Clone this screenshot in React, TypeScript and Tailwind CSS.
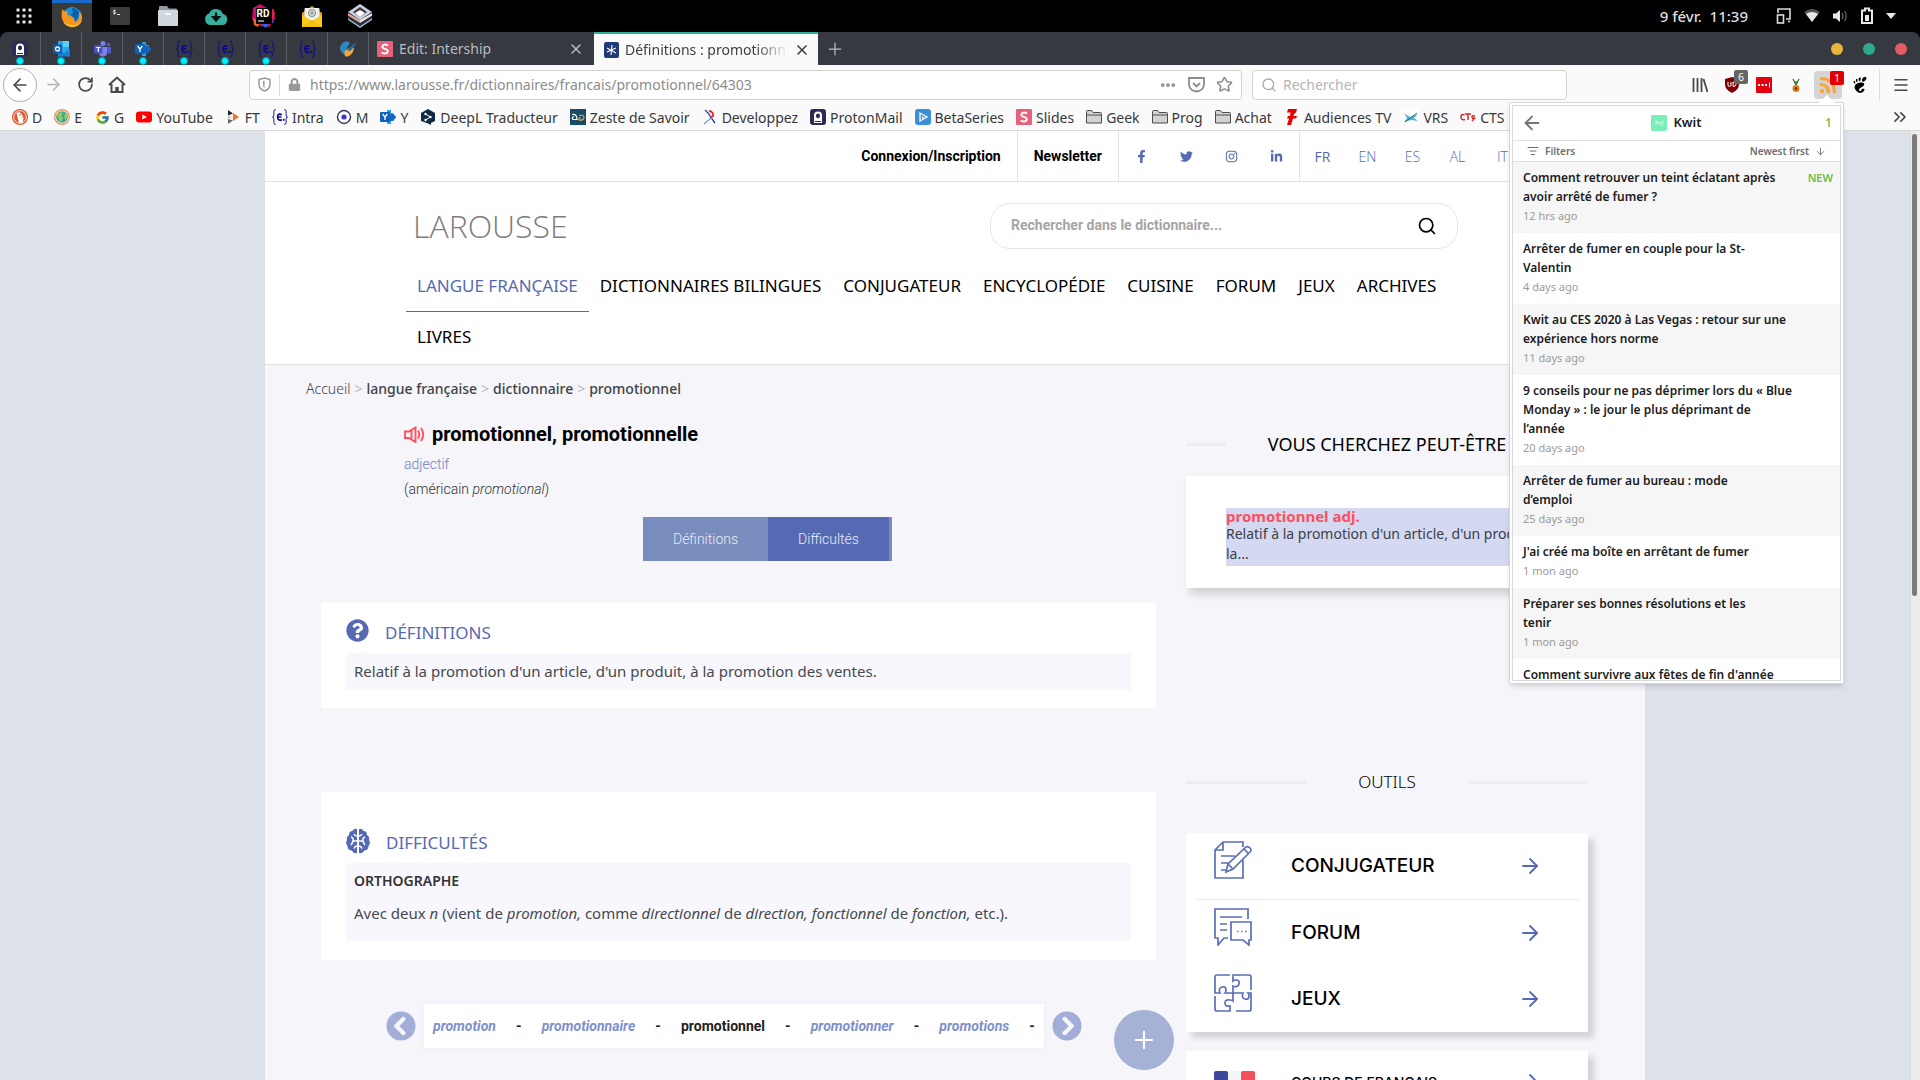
import type { ReactNode } from "react"
import {
  ArrowDown,
  ArrowLeft,
  ArrowRight,
  ChevronsRight,
  ListFilter,
  Menu,
  MoreHorizontal,
  Plus,
  RotateCw,
  Search,
  Star,
  X,
} from "lucide-react"
import {
  FaChevronCircleLeft,
  FaChevronCircleRight,
  FaFacebookF,
  FaInstagram,
  FaLinkedinIn,
  FaLock,
  FaQuestionCircle,
  FaTwitter,
} from "react-icons/fa"
import { FcGoogle } from "react-icons/fc"
import { SiGnome } from "react-icons/si"

// ---------- Small icons ----------

function AppsGrid() {
  return (
    <svg width="16" height="16" viewBox="0 0 16 16" fill="#e6e6e6">
      {[0, 6, 12].map(y => [0, 6, 12].map(x => <rect key={`${x}-${y}`} x={x + 0.5} y={y + 0.5} width="3" height="3" rx="0.6" />))}
    </svg>
  )
}

function Firefox() {
  return (
    <svg width="24" height="24" viewBox="0 0 24 24">
      <circle cx="12.5" cy="11.500" r="9.500" fill="#f59a23" />
      <path d="M5 4q4-4 10-2.500Q21 4 22 9l-2 3-4 6-2-6-5-1-5-4z" fill="#1d8fd8" />
      <path d="M12 2q5 0 7 5l-1 4-3 5-1-5-4-2 3-2z" fill="#0f5f9f" />
      <path d="M2 3l2 2 4 1-1 3 5 1-2 3q2 5 7 2 3-3 2-9 3 2 3 5-1 9-10 9Q2 19 1.500 10z" fill="#f7941d" />
      <path d="M3 16q4 6 11 5 6-1 8-7-4 5-9 5T3 16z" fill="#fdb92e" />
    </svg>
  )
}

function Terminal() {
  return (
    <svg width="20" height="18" viewBox="0 0 20 18">
      <rect width="20" height="18" rx="1" fill="#3b3b3b" />
      <path d="M5.700 3.500H4.200q-1 0-1 .8t1 .8h.6q1 0 1 .8t-1 .8H3M4.500 2.500v5" stroke="#ddd" strokeWidth="0.800" fill="none" />
      <path d="M7 7.500h3" stroke="#ddd" />
    </svg>
  )
}

function Files() {
  return (
    <svg width="20" height="20" viewBox="0 0 20 20">
      <path d="M1 1q0-1 1-1h7l2 2.500h7q1 0 1 1V8H1z" fill="#8e9ba4" />
      <rect y="4" width="20" height="16" rx="1" fill="#cfd8dc" />
      <path d="M7 8h6" stroke="#fff" strokeWidth="1.500" />
    </svg>
  )
}

function CloudDown() {
  return (
    <svg width="24" height="18" viewBox="0 0 24 18">
      <path d="M6 18a6 6 0 0 1-1-11.500A7.500 7.500 0 0 1 19 7a5.600 5.600 0 0 1-1 11z" fill="#34b19c" />
      <path d="M12 5.500v5M9 10l3 3.500 3-3.500z" stroke="#101010" strokeWidth="2.200" fill="#101010" />
    </svg>
  )
}

function Rider() {
  return (
    <svg width="24" height="24" viewBox="0 0 24 24">
      <path d="M1 4l7-4 7 4 7 1 1 10-6 8-9-1-8-7z" fill="#c90f5e" />
      <path d="M1 14l7 4-2 5-4-2z" fill="#f5622e" />
      <path d="M18 13l4 6-5-1-3 6-4-3z" fill="#087cfa" />
      <path d="M19 4l4 5-2 6-3-3z" fill="#e2234f" />
      <rect x="4" y="4" width="16" height="16" fill="#000" />
      <text x="4.500" y="12.500" fontSize="10" fontWeight="700" fontFamily="Roboto, sans-serif" fill="#fff">RD</text>
      <path d="M6 17h6" stroke="#ddd" strokeWidth="1.200" />
    </svg>
  )
}

function Mail() {
  return (
    <svg width="20" height="21" viewBox="0 0 20 21">
      <path d="M0 7l10-7 10 7v14H0z" fill="#d9a916" />
      <rect x="2.500" y="2" width="15" height="14" rx="1" fill="#efefef" />
      <circle cx="10" cy="7" r="3.500" fill="none" stroke="#777" />
      <circle cx="10" cy="7" r="1.200" fill="none" stroke="#777" />
      <path d="M0 9l10 6 10-6v12H0z" fill="#fbcb1c" />
      <path d="M0 21l10-7 10 7z" fill="#f3bd14" />
    </svg>
  )
}

function Boxes() {
  return (
    <svg width="24" height="24" viewBox="0 0 24 24">
      <path d="M0 14l12 8 12-8v2l-12 8-12-8z" fill="#9fb3cc" />
      <path d="M0 11l12 8 12-8v3l-12 8-12-8z" fill="#2b3340" />
      <path d="M0 9l12 7v3L0 11.500z" fill="#e6a98c" />
      <path d="M12 16l12-7v2.500L12 19z" fill="#f4e9e2" />
      <path d="M12 0l12 8-12 8L0 8z" fill="#c6d3e4" />
      <path d="M12 3l7 5-7 5-7-5z" fill="#4b3440" />
      <path d="M12 6l5 3-5 4-5-4z" fill="#fff" />
    </svg>
  )
}

function EpitechIcon() {
  return (
    <svg width="17" height="18" viewBox="0 0 17 18" fill="none" stroke="#0a0a92">
      <path d="M4 1Q2 1 2 3v3.500Q2 9 .5 9 2 9 2 11.500V15q0 2 2 2M13 1q2 0 2 2v3.500q0 2.500 1.500 2.500-1.500 0-1.500 2.500V15q0 2-2 2" />
      <path d="M10.500 6.500Q6 4.500 6 9t4.500 3M6 9h4" strokeWidth="1.800" />
      <circle cx="12.500" cy="12" r="0.700" fill="#0a0a92" />
    </svg>
  )
}

function ProtonIcon() {
  return (
    <svg width="16" height="16" viewBox="0 0 16 16">
      <rect width="16" height="16" rx="3" fill="#2b2b55" />
      <path d="M4 14V6.500a4 4 0 0 1 8 0V14z" fill="#fff" />
      <path d="M6 8V6.500a2 2 0 0 1 4 0V8l-2 1.500z" fill="#2b2b55" />
      <path d="M5 12.500h6" stroke="#2b2b55" />
    </svg>
  )
}

function OutlookIcon() {
  return (
    <svg width="17" height="16" viewBox="0 0 17 16">
      <rect x="5" width="11" height="12" fill="#29a9ea" />
      <path d="M10 0h6v6h-6z" fill="#5fd0f8" />
      <path d="M5 8l6 4 6-4v7.500H5z" fill="#1480d2" />
      <rect y="3.500" width="9" height="9" rx="1" fill="#0a5cb0" />
      <circle cx="4.500" cy="8" r="2" fill="none" stroke="#fff" strokeWidth="1.300" />
    </svg>
  )
}

function TeamsIcon() {
  return (
    <svg width="17" height="16" viewBox="0 0 17 16">
      <circle cx="9" cy="2.500" r="2.500" fill="#7b83eb" />
      <circle cx="14.500" cy="3.500" r="1.700" fill="#5059c9" />
      <path d="M12 6h5v4.500q0 2.500-3 2.500z" fill="#5059c9" />
      <path d="M5 6h8v5.500q0 4-4 4t-4-4z" fill="#7b83eb" />
      <rect y="4" width="8.500" height="8.500" rx="1" fill="#4b53bc" />
      <path d="M2.200 6.500h4.200M4.300 6.500v4.200" stroke="#fff" strokeWidth="1.200" />
    </svg>
  )
}

function YammerIcon() {
  return (
    <svg width="16" height="16" viewBox="0 0 16 16">
      <path d="M7 1h4v3h2l3 4-3 4h-2v3H7z" fill="#29a0e8" />
      <path d="M10 5h3l3 3-3 4h-3z" fill="#1068bd" />
      <rect y="3" width="10" height="10" rx="1" fill="#0f62b5" />
      <path d="M2.700 5l2.300 3.200L7.300 5M5 8v3" stroke="#fff" strokeWidth="1.300" fill="none" />
    </svg>
  )
}

function SwirlIcon() {
  return (
    <svg width="17" height="16" viewBox="0 0 17 16">
      <path d="M4 1q4-2 6 1l-3 5q-3 3-1 7-5-1-6-6 0-5 4-7z" fill="#2f86c4" />
      <path d="M5 15q-2-5 2-7l4-2 3 1q-1 6-5 8-2 1-4 0z" fill="#f0a53c" />
      <path d="M7 9l5-5 5-3-4 6-3 3z" fill="#1f6aa3" />
    </svg>
  )
}

function SlidesIcon() {
  return (
    <svg width="16" height="16" viewBox="0 0 16 16">
      <rect width="16" height="16" rx="1" fill="#e4637c" />
      <path d="M10.800 4.800Q10 3.500 8 3.500T5.300 5.600Q5.300 7.400 8 7.900t2.700 2.400Q10.700 12.500 8 12.500T5 11.200" stroke="#fff" strokeWidth="1.800" fill="none" />
    </svg>
  )
}

function LarousseIcon() {
  return (
    <svg width="15" height="16" viewBox="0 0 15 16">
      <rect width="15" height="16" rx="2" fill="#213a78" />
      <path d="M8 3L7 13M3 6l9 5M12 6l-9 4" stroke="#fff" strokeWidth="1.100" />
    </svg>
  )
}

function Duck() {
  return (
    <svg width="16" height="16" viewBox="0 0 16 16">
      <circle cx="8" cy="8" r="8" fill="#de5833" />
      <circle cx="8" cy="8" r="6.300" fill="none" stroke="#fff" strokeWidth="0.800" />
      <path d="M4.500 4q3-2 5 1l2 4-1 5H7z" fill="#fff" />
      <path d="M8 8l4-.5-3 2z" fill="#fdd20a" />
      <circle cx="8" cy="6" r="0.700" fill="#2d4f8e" />
    </svg>
  )
}

function Ecosia() {
  return (
    <svg width="16" height="16" viewBox="0 0 16 16">
      <circle cx="8" cy="8" r="8" fill="#ef8d6b" />
      <circle cx="8" cy="8" r="6.800" fill="#f3e7a1" />
      <circle cx="8" cy="8" r="5.800" fill="#36a3bd" />
      <path d="M3 6q3-4 6-2l-2 3 2 2-2 4q-3-1-2-4zM10 6l3-1v4l-2 2z" fill="#9fcf3f" />
    </svg>
  )
}

function YoutubeIcon() {
  return (
    <svg width="16" height="16" viewBox="0 0 16 16">
      <rect y="2.500" width="16" height="11" rx="3" fill="#f00" />
      <path d="M6.300 5.500v5L10.800 8z" fill="#fff" />
    </svg>
  )
}

function FtIcon() {
  return (
    <svg width="14" height="16" viewBox="0 0 14 16">
      <path d="M2 1l5 3.500-5 2z" fill="#222" />
      <path d="M2 6.500l4 1.500-4 2z" fill="#c4c4c4" />
      <path d="M2 10l5 1.500L2 15z" fill="#666" />
      <path d="M7 4l6 4-6 4z" fill="#f4702b" />
    </svg>
  )
}

function TargetIcon() {
  return (
    <svg width="16" height="16" viewBox="0 0 16 16">
      <circle cx="8" cy="8" r="6.500" fill="#fff" stroke="#333a56" strokeWidth="1.400" />
      <circle cx="8" cy="8" r="2.600" fill="#3b36c9" />
    </svg>
  )
}

function DeeplIcon() {
  return (
    <svg width="14" height="16" viewBox="0 0 14 16">
      <path d="M7 0l7 4v8l-4 2v2l-3-1.500L0 12V4z" fill="#0f2b46" />
      <path d="M4.500 5l5 3-5 3" stroke="#fff" fill="none" />
      <circle cx="4.500" cy="5" r="1.200" fill="#fff" />
      <circle cx="9.500" cy="8" r="1.200" fill="#fff" />
      <circle cx="4.500" cy="11" r="1.200" fill="#fff" />
    </svg>
  )
}

function ZesteIcon() {
  return (
    <svg width="16" height="16" viewBox="0 0 16 16">
      <rect width="16" height="16" fill="#174c66" />
      <path d="M2 5.500q5-1 5 5H3q-2-2 1-3" stroke="#fff" strokeWidth="1.200" fill="none" />
      <path d="M9 6.500q5-1 5 2T9 11q-1-2 2-2.500" stroke="#f0a93c" strokeWidth="1.200" fill="none" />
    </svg>
  )
}

function DeveloppezIcon() {
  return (
    <svg width="14" height="16" viewBox="0 0 14 16" fill="none">
      <path d="M2 1q4 3 7 9l3 4" stroke="#1a3ba8" strokeWidth="1.300" />
      <path d="M6 2q5 1 4 5L7 9" stroke="#e22" strokeWidth="1.800" />
      <path d="M9 9Q5 11 1 15" stroke="#6b95d6" strokeWidth="1.200" />
    </svg>
  )
}

function BetaIcon() {
  return (
    <svg width="16" height="16" viewBox="0 0 16 16">
      <rect width="16" height="16" rx="3" fill="#3b8fd6" />
      <path d="M5 4v8l7-4z" stroke="#fff" strokeWidth="1.300" fill="none" />
      <path d="M7 7v3l2-1.500z" fill="#fff" />
    </svg>
  )
}

function FolderIcon() {
  return (
    <svg width="16" height="16" viewBox="0 0 16 16" stroke="#4d4d4d" fill="#d2d2d2">
      <path d="M.5 14V2.500q0-1 1-1h4l1.500 2h7.500q1 0 1 1V14z" />
      <path d="M.5 6h15" />
    </svg>
  )
}

function AudienceIcon() {
  return (
    <svg width="12" height="16" viewBox="0 0 12 16" fill="#e60000">
      <path d="M2 0h9l-1 3.500L8 5l-.5 2H11l-1 2.500H7L5 16H1l2-6.500H1L2 7h2l.5-3.500H1z" />
    </svg>
  )
}

function VrsIcon() {
  return (
    <svg width="16" height="16" viewBox="0 0 16 16">
      <rect width="16" height="16" fill="#fff" />
      <path d="M1 4l6 4 8-3-4 4 4 3-7-1-7 2 3-4z" fill="#55b4d9" />
      <path d="M2 13l12-9" stroke="#2e5c7d" />
    </svg>
  )
}

function CtsIcon() {
  return (
    <svg width="16" height="16" viewBox="0 0 16 16" fill="none" stroke="#cf2a2a" strokeWidth="1.500">
      <path d="M4.500 6Q1 4.500 1 8t4 2.500M5 5h6M8 5v6M15 7q-3-1-3 .8t2 1.200T12 12" />
    </svg>
  )
}

function LibraryIcon() {
  return (
    <svg width="16" height="16" viewBox="0 0 16 16" stroke="#4a4a4a" strokeWidth="1.800">
      <path d="M1.500 1v14M5.500 1v14M9.500 1v14M11.500 2l4 13" />
    </svg>
  )
}

function HomeIcon() {
  return (
    <svg width="18" height="17" viewBox="0 0 18 17" fill="none" stroke="#4a4a4a" strokeWidth="2">
      <path d="M1 9l8-7.500L17 9M3.500 8v8h11V8" />
      <path d="M9 16v-5" strokeWidth="3.500" />
    </svg>
  )
}

function ShieldIcon() {
  return (
    <svg width="13" height="15" viewBox="0 0 13 15">
      <path d="M1 2.500L6.500 1 12 2.500V7q0 5-5.500 7Q1 12 1 7z" fill="none" stroke="#999" strokeWidth="1.500" />
      <path d="M6.500 3.500v8Q5 10 5 7V4z" fill="#999" />
    </svg>
  )
}

function PocketIcon() {
  return (
    <svg width="17" height="16" viewBox="0 0 17 16" fill="none" stroke="#8c8c8c" strokeWidth="1.800">
      <path d="M1 1h15v6.500q-.5 6-7.500 7-7-1-7.500-7z" />
      <path d="M5 6l3.500 3.500L12 6" />
    </svg>
  )
}

function SpeakerIcon() {
  return (
    <svg width="21" height="17" viewBox="0 0 21 17" fill="none" stroke="#ff4f5e" strokeWidth="1.900">
      <path d="M5 5.500H1V12h4L11.500 16V1.500zM7.500 4v9.500" />
      <path d="M14 4.500q2.500 4 0 8M17 2q4.500 6.500 0 13" />
    </svg>
  )
}

function BrainIcon() {
  return (
    <svg width="24" height="26" viewBox="0 0 24 26">
      <path
        d="M11 1Q8 0 6.500 3 3 3 3 7 0 8.500 1 12q-2 3 .5 6 0 4 4 4.500Q8 26 11 25zM13 1q3-1 4.500 2Q21 3 21 7q3 1.500 2 5 2 3-.5 6 0 4-4 4.500Q16 26 13 25z"
        fill="#556ab3"
      />
      <path d="M11 8q-2 0-3-2M13 8q2 0 3-2M12 13H7M12 13h5M5 9q3 1 2 4t-2 4M19 9q-3 1-2 4t2 4M11 18q-2 0-3 2.500M13 18q2 0 3 2.500" stroke="#fff" strokeWidth="1.500" fill="none" />
    </svg>
  )
}

function ConjugateurIcon() {
  return (
    <svg width="38" height="38" viewBox="0 0 38 38" fill="none" stroke="#5a6fb8" strokeWidth="1.700">
      <path d="M29 6V1H9L1 9v28h28V19M9 1v8H1" />
      <path d="M7 15h14M7 22h8M7 29h5M12 31l2-8L32 6q2-1 4 1t0 4L19 28zM14 23l5 5M30 8l4 4" />
    </svg>
  )
}

function ForumIcon() {
  return (
    <svg width="38" height="38" viewBox="0 0 38 38" fill="none" stroke="#5a6fb8" strokeWidth="1.700">
      <path d="M34 11V1H1v29h3v7l6-7h4M6 9h22M6 16h7M6 22h7" />
      <path d="M17 14h20v18h-2v5l-6-5H17z" />
      <path d="M23 23.500h1.500M27 23.500h1.500M31 23.500h1.500" />
    </svg>
  )
}

function JeuxIcon() {
  return (
    <svg width="38" height="38" viewBox="0 0 38 38" fill="none" stroke="#5a6fb8" strokeWidth="1.700">
      <path d="M16 1H3Q1 1 1 3v16h5q-2-5 2-6t4 3q0 2-1 3h8v-7q5 2 6-2t-3-4q-2 0-3 1V1h16q2 0 2 2v13" />
      <path d="M1 22v13q0 2 2 2h13v-5q-5 1-5-3t5-3q2 0 3 1v-8h10q-2 5 2 6t4-3q0-2-1-3h3v16q0 2-2 2H22" />
    </svg>
  )
}

function StatusIcons() {
  return (
    <div className="flex items-center gap-3">
      <svg width="16" height="18" viewBox="0 0 16 18" fill="none" stroke="#dcdcdc" strokeWidth="1.600">
        <path d="M2 6V2h12v10h-4M12 14.500h2" />
        <rect x="1.500" y="8" width="6" height="8" />
      </svg>
      <svg width="16" height="14" viewBox="0 0 16 14">
        <path d="M0 3q8-6 16 0l-8 10z" fill="#555" />
        <path d="M2 5q6-4 12 0l-6 8z" fill="#e8e8e8" />
      </svg>
      <svg width="16" height="14" viewBox="0 0 16 14">
        <path d="M1 4.500h3L8 1v12L4 9.500H1z" fill="#e8e8e8" />
        <path d="M10 4q2 3 0 6M12.500 2q3.500 5 0 10" stroke="#666" strokeWidth="1.300" fill="none" />
      </svg>
      <svg width="14" height="18" viewBox="0 0 14 18">
        <path d="M2 3.500h3V1.500h4v2h3V16H2z" fill="none" stroke="#e8e8e8" strokeWidth="2" />
        <path d="M5 8h4v6H5z" fill="#e8e8e8" />
      </svg>
      <svg width="10" height="6" viewBox="0 0 10 6" fill="#e8e8e8">
        <path d="M0 0h10L5 6z" />
      </svg>
    </div>
  )
}

function UblockIcon() {
  return (
    <svg width="16" height="16" viewBox="0 0 16 16">
      <path d="M8 0l7 2v5q0 6-7 9-7-3-7-9V2z" fill="#800000" />
      <path d="M4 5v3q0 1.500 1.500 1.500T7 8V5M9 5v4.500q3 0 3-2T9 5z" stroke="#fff" fill="none" />
    </svg>
  )
}

function PasswordIcon() {
  return (
    <svg width="16" height="16" viewBox="0 0 16 16">
      <rect width="16" height="16" rx="1" fill="#e3000f" />
      <path d="M2 8h2M5.500 8h2M9 8h2" stroke="#fff" strokeWidth="2" />
      <path d="M13.500 5.500v5" stroke="#fff" />
    </svg>
  )
}

function CarrotIcon() {
  return (
    <svg width="10" height="16" viewBox="0 0 10 16">
      <path d="M5 8L2 2M5 8V4M5 8l3-6" stroke="#4d7a2e" strokeWidth="1.400" />
      <circle cx="5" cy="11.500" r="3.500" fill="#e07b18" />
      <circle cx="5" cy="11.500" r="1.300" fill="#5f2b05" />
    </svg>
  )
}

function RssIcon() {
  return (
    <svg width="18" height="18" viewBox="0 0 18 18" fill="none" stroke="#f9a436" strokeWidth="3.200">
      <path d="M1 2.500q14.500 0 14.500 14.500M1 8.500q8.500 0 8.500 8.500" />
      <circle cx="3" cy="15" r="2.200" fill="#f9a436" stroke="none" />
    </svg>
  )
}

// ---------- Data ----------

const launchers = [
  { name: "Terminal", icon: <Terminal /> },
  { name: "Fichiers", icon: <Files /> },
  { name: "Cloud", icon: <CloudDown /> },
  { name: "Rider", icon: <Rider /> },
  { name: "Courrier", icon: <Mail /> },
  { name: "Boxes", icon: <Boxes /> },
]

const pinnedTabs = [
  { name: "ProtonMail", icon: <ProtonIcon />, unread: true },
  { name: "Outlook", icon: <OutlookIcon />, unread: true },
  { name: "Teams", icon: <TeamsIcon />, unread: true },
  { name: "Yammer", icon: <YammerIcon />, unread: true },
  { name: "Intra 1", icon: <EpitechIcon />, unread: true },
  { name: "Intra 2", icon: <EpitechIcon />, unread: true },
  { name: "Intra 3", icon: <EpitechIcon />, unread: true },
  { name: "Intra 4", icon: <EpitechIcon />, unread: false },
  { name: "Swirl", icon: <SwirlIcon />, unread: false },
]

const bookmarks: { label: string; icon: ReactNode }[] = [
  { label: "D", icon: <Duck /> },
  { label: "E", icon: <Ecosia /> },
  { label: "G", icon: <FcGoogle size={15} /> },
  { label: "YouTube", icon: <YoutubeIcon /> },
  { label: "FT", icon: <FtIcon /> },
  { label: "Intra", icon: <EpitechIcon /> },
  { label: "M", icon: <TargetIcon /> },
  { label: "Y", icon: <YammerIcon /> },
  { label: "DeepL Traducteur", icon: <DeeplIcon /> },
  { label: "Zeste de Savoir", icon: <ZesteIcon /> },
  { label: "Developpez", icon: <DeveloppezIcon /> },
  { label: "ProtonMail", icon: <ProtonIcon /> },
  { label: "BetaSeries", icon: <BetaIcon /> },
  { label: "Slides", icon: <SlidesIcon /> },
  { label: "Geek", icon: <FolderIcon /> },
  { label: "Prog", icon: <FolderIcon /> },
  { label: "Achat", icon: <FolderIcon /> },
  { label: "Audiences TV", icon: <AudienceIcon /> },
  { label: "VRS", icon: <VrsIcon /> },
  { label: "CTS", icon: <CtsIcon /> },
]

const navItems = [
  "LANGUE FRANÇAISE",
  "DICTIONNAIRES BILINGUES",
  "CONJUGATEUR",
  "ENCYCLOPÉDIE",
  "CUISINE",
  "FORUM",
  "JEUX",
  "ARCHIVES",
  "LIVRES",
]

const feed = [
  { title: "Comment retrouver un teint éclatant après\navoir arrêté de fumer ?", age: "12 hrs ago", isNew: true },
  { title: "Arrêter de fumer en couple pour la St-\nValentin", age: "4 days ago" },
  { title: "Kwit au CES 2020 à Las Vegas : retour sur une\nexpérience hors norme", age: "11 days ago" },
  { title: "9 conseils pour ne pas déprimer lors du « Blue\nMonday » : le jour le plus déprimant de\nl’année", age: "20 days ago" },
  { title: "Arrêter de fumer au bureau : mode\nd’emploi", age: "25 days ago" },
  { title: "J'ai créé ma boîte en arrêtant de fumer", age: "1 mon ago" },
  { title: "Préparer ses bonnes résolutions et les\ntenir", age: "1 mon ago" },
  { title: "Comment survivre aux fêtes de fin d'année" },
]

// ---------- Browser chrome ----------

function DesktopBar() {
  return (
    <div className="flex h-8 shrink-0 items-center bg-black pr-6 text-[15px] font-medium text-[#dedede]">
      <button type="button" aria-label="Applications" className="ml-4 mr-5"><AppsGrid /></button>
      <button type="button" aria-label="Firefox" className="flex h-8 w-10 items-center justify-center border-t-[3px] border-[#1b6acb] bg-[#3a3a3a]">
        <Firefox />
      </button>
      <div className="ml-1 flex">
        {launchers.map(app => (
          <button key={app.name} type="button" aria-label={app.name} className="flex h-8 w-12 items-center justify-center">{app.icon}</button>
        ))}
      </div>
      <span className="ml-auto mr-7 whitespace-pre">9 févr.  11:39</span>
      <StatusIcons />
    </div>
  )
}

function TabBar() {
  return (
    <div className="bg-black">
      <div className="flex h-[33px] items-stretch rounded-t-lg bg-[#363940] text-[14px] text-[#b9bcc0]">
        {pinnedTabs.map(tab => (
          <button key={tab.name} type="button" aria-label={tab.name} className="relative flex w-[41px] items-center justify-center border-r border-[#5b5e63]">
            {tab.icon}
            {tab.unread && <span className="absolute bottom-0 left-4 h-2 w-2 rounded-full border border-[#0e9aa7] bg-[#00f0ff]" />}
          </button>
        ))}
        <div className="flex w-[225px] items-center gap-[6px] px-2 pr-[10px]">
          <SlidesIcon />
          <span className="flex-1">Edit: Intership</span>
          <button type="button" aria-label="Fermer l'onglet"><X size={16} /></button>
        </div>
        <div className="flex w-[224px] items-center gap-[6px] border-t-2 border-[#2eb398] bg-[#fafafa] pl-[10px] pr-2 text-[#404040]">
          <LarousseIcon />
          <span className="min-w-0 flex-1 overflow-hidden whitespace-nowrap [mask-image:linear-gradient(to_right,#000_80%,transparent)]">Définitions : promotionnel</span>
          <button type="button" aria-label="Fermer l'onglet"><X size={16} strokeWidth={2.5} /></button>
        </div>
        <button type="button" aria-label="Nouvel onglet" className="ml-[7px]"><Plus size={20} strokeWidth={1.5} /></button>
        <div className="ml-auto mr-[13px] flex items-center gap-5">
          <button type="button" aria-label="Réduire" className="h-3 w-3 rounded-full bg-[#e9b63b]" />
          <button type="button" aria-label="Agrandir" className="h-3 w-3 rounded-full bg-[#2ea88f]" />
          <button type="button" aria-label="Fermer" className="h-3 w-3 rounded-full bg-[#e65c65]" />
        </div>
      </div>
    </div>
  )
}

function FeedPopup() {
  return (
    <div className="absolute right-[76px] top-[37px] z-20 w-[335px] rounded-xs border border-[#d6d6d6] bg-white p-[2px] shadow-md">
      <span className="absolute -top-2 right-[8px] h-0 w-0 border-x-8 border-b-8 border-x-transparent border-b-white" />
      <div className="h-[576px] overflow-hidden border border-[#d9d9d9]">
        <div className="flex h-[35px] items-center justify-between border-b border-[#dedede] px-2 text-[12px] font-semibold">
          <button type="button" aria-label="Retour" className="w-[22px] text-[#757575]"><ArrowLeft size={22} /></button>
          <h2 className="flex items-center gap-[6px] text-[13px] text-[#1c1c1c]">
            <svg width="16" height="16" viewBox="0 0 16 16">
              <rect width="16" height="16" rx="2" fill="#78efb6" />
              <path d="M4 5l8 6M5 10V7l3 2 4-3v3" stroke="#d4fbe8" fill="none" />
            </svg>
            Kwit
          </h2>
          <span className="w-[22px] text-right text-[#7cc254]">1</span>
        </div>
        <div className="flex h-[21px] items-center justify-between border-b border-[#dedede] px-[14px] text-[10px] font-semibold text-[#6d6d6d]">
          <button type="button" className="flex items-center gap-[6px]"><ListFilter size={12} />Filters</button>
          <button type="button" className="flex items-center gap-[6px]">Newest first<ArrowDown size={11} /></button>
        </div>
        <ul>
          {feed.map(item => (
            <li key={item.title} className="flex justify-between bg-white px-[10px] pb-[7px] pt-[6px] odd:bg-[#f6f6f6]">
              <div>
                <a href="#" className="block whitespace-pre text-[12px] font-semibold leading-[19px] text-[#1c1c1c]">{item.title}</a>
                {item.age && <span className="block text-[11px] leading-5 text-[#9b9b9b]">{item.age}</span>}
              </div>
              {item.isNew && <span className="-mr-[3px] text-[11px] font-semibold leading-[19px] text-[#6cbf3f]">NEW</span>}
            </li>
          ))}
        </ul>
      </div>
    </div>
  )
}

function Toolbar() {
  return (
    <div className="relative shrink-0 border-b border-[#d8d8d8] bg-[#fafafa] text-[#4a4a4a]">
      <div className="flex h-[39px] items-center pl-[3px] pr-[10px]">
        <button type="button" aria-label="Précédent" className="flex h-[34px] w-[34px] items-center justify-center rounded-full border border-[#b0b0b0] bg-white"><ArrowLeft size={20} /></button>
        <div className="ml-[7px] flex items-center gap-[14px]">
          <button type="button" aria-label="Suivant" className="text-[#b5b5b5]"><ArrowRight size={19} /></button>
          <button type="button" aria-label="Recharger"><RotateCw size={17} strokeWidth={2.5} /></button>
          <button type="button" aria-label="Accueil"><HomeIcon /></button>
        </div>
        <div className="ml-[123px] flex h-[30px] flex-1 items-center rounded-sm border border-[#d3d3d3] bg-white px-2 text-[#8c8c8c]">
          <ShieldIcon />
          <span className="ml-2 mr-2 h-[22px] w-px bg-[#d9d9d9]" />
          <FaLock size={13} className="text-[#999]" />
          <input aria-label="Adresse" defaultValue="https://www.larousse.fr/dictionnaires/francais/promotionnel/64303" className="ml-[9px] min-w-0 flex-1 bg-transparent text-[14px] outline-none" />
          <div className="flex items-center gap-[11px]">
            <button type="button" aria-label="Actions"><MoreHorizontal size={18} strokeWidth={3} /></button>
            <button type="button" aria-label="Pocket"><PocketIcon /></button>
            <button type="button" aria-label="Marquer la page"><Star size={17} strokeWidth={2.2} /></button>
          </div>
        </div>
        <div className="ml-[10px] flex h-[30px] w-[315px] items-center gap-[6px] rounded-sm border border-[#d3d3d3] bg-white px-2 text-[#a8a8a8]">
          <Search size={16} />
          <input aria-label="Rechercher" placeholder="Rechercher" className="min-w-0 flex-1 bg-transparent text-[14px] outline-none placeholder:text-[#b5b5b5]" />
        </div>
        <div className="ml-[117px] flex items-center">
          <button type="button" aria-label="Bibliothèque" className="flex w-8 justify-center"><LibraryIcon /></button>
          <button type="button" aria-label="uBlock" className="relative flex w-8 justify-center">
            <UblockIcon />
            <span className="absolute -top-[7px] left-[18px] h-[14px] w-[14px] rounded-xs bg-[#666] text-center text-[10px] leading-[14px] text-white">6</span>
          </button>
          <button type="button" aria-label="Mots de passe" className="flex w-8 justify-center"><PasswordIcon /></button>
          <button type="button" aria-label="Carotte" className="flex w-8 justify-center"><CarrotIcon /></button>
          <button type="button" aria-label="Flux" className="relative mx-[2px] flex h-7 w-7 items-center justify-center rounded-sm bg-[#d4d4d4]">
            <RssIcon />
            <span className="absolute left-4 top-0 h-[14px] w-[14px] rounded-xs bg-[#e00000] text-center text-[10px] leading-[14px] text-white">1</span>
          </button>
          <button type="button" aria-label="Gnome" className="flex w-8 justify-center text-black"><SiGnome size={16} /></button>
          <span className="ml-[3px] mr-3 h-8 w-px bg-[#dcdcdc]" />
          <button type="button" aria-label="Menu"><Menu size={18} /></button>
        </div>
      </div>
      <div className="flex h-[26px] items-center pl-3 pr-[10px] text-[14px] text-[#383838]">
        <div className="flex items-center gap-3">
          {bookmarks.map(b => (
            <a key={b.label} href="#" className="flex items-center gap-1 whitespace-nowrap">
              <span className="flex w-4 justify-center">{b.icon}</span>
              {b.label}
            </a>
          ))}
        </div>
        <button type="button" aria-label="Plus de marque-pages" className="ml-auto text-[#4a4a4a]"><ChevronsRight size={20} /></button>
      </div>
      <FeedPopup />
    </div>
  )
}

// ---------- Larousse page ----------

function SiteHeader() {
  return (
    <header className="border-b border-[#dedfe3] bg-white pb-px">
      <div className="flex h-[51px] items-stretch justify-end border-b border-[#e2e2e5] pr-[120px] font-['Roboto',sans-serif] text-[14px] font-bold text-black">
        <a href="#" className="flex items-center px-4">Connexion/Inscription</a>
        <a href="#" className="flex items-center border-l border-[#e2e2e5] px-4">Newsletter</a>
        <div className="flex items-center border-x border-[#e2e2e5] text-[#556ab3]">
          <a href="#" aria-label="Facebook" className="flex w-[45px] justify-center"><FaFacebookF size={13} /></a>
          <a href="#" aria-label="Twitter" className="flex w-[45px] justify-center"><FaTwitter size={13} /></a>
          <a href="#" aria-label="Instagram" className="flex w-[45px] justify-center"><FaInstagram size={13} /></a>
          <a href="#" aria-label="LinkedIn" className="flex w-[45px] justify-center"><FaLinkedinIn size={13} /></a>
        </div>
        <div className="flex items-center font-['Open_Sans',sans-serif] text-[14px] font-light text-[#556ab3]">
          <a href="#" className="w-[45px] text-center font-normal">FR</a>
          <a href="#" className="w-[45px] text-center">EN</a>
          <a href="#" className="w-[45px] text-center">ES</a>
          <a href="#" className="w-[45px] text-center">AL</a>
          <a href="#" className="w-[45px] text-center">IT</a>
        </div>
      </div>
      <div className="flex h-[79px] items-center justify-between pl-[148px] pr-[187px] pt-2">
        <a href="#" className="font-['Open_Sans',sans-serif] text-[32px] font-light text-[#7d7d7d]">LAROUSSE</a>
        <form className="flex h-[46px] w-[468px] items-center rounded-[20px] border border-[#e7e7ea] pl-5 pr-5 font-['Roboto',sans-serif] text-[14px] font-bold">
          <input aria-label="Rechercher dans le dictionnaire" placeholder="Rechercher dans le dictionnaire..." className="min-w-0 flex-1 outline-none placeholder:text-[#a5a5a5]" />
          <button type="submit" aria-label="Lancer la recherche" className="text-black"><Search size={20} /></button>
        </form>
      </div>
      <nav className="flex flex-wrap pl-[141px] pr-[170px] text-[17px] text-black">
        {navItems.map((item, i) => (
          <a key={item} href="#" className={i === 0 ? "h-[51px] border-b border-[#556ab3] px-[11px] leading-[50px] text-[#556ab3]" : "h-[51px] px-[11px] leading-[50px]"}>{item}</a>
        ))}
      </nav>
    </header>
  )
}

function Breadcrumb() {
  return (
    <nav className="flex gap-1 pl-[41px] pt-[13px] text-[14px] leading-[22px] text-[#3f4247]">
      <a href="#" className="font-light">Accueil</a>
      <span className="text-[#b9bac2]">&gt;</span>
      <a href="#" className="font-medium">langue française</a>
      <span className="text-[#b9bac2]">&gt;</span>
      <a href="#" className="font-medium">dictionnaire</a>
      <span className="text-[#b9bac2]">&gt;</span>
      <a href="#" className="font-medium">promotionnel</a>
    </nav>
  )
}

function Article() {
  return (
    <main className="min-w-0 flex-1">
      <div className="pl-[83px] pt-5 font-['Roboto',sans-serif]">
        <div className="flex items-center gap-[7px] leading-7">
          <button type="button" aria-label="Écouter"><SpeakerIcon /></button>
          <h1 className="text-[20px] font-bold text-black">promotionnel, promotionnelle</h1>
        </div>
        <p className="pt-1 text-[14px] font-light leading-[25px] text-[#6d80c4]">adjectif</p>
        <p className="text-[14px] font-light leading-[25px] text-[#333]">(américain <i>promotional</i>)</p>
      </div>
      <div className="mt-[15px] flex justify-center pl-[58px]">
        <div className="flex h-11 w-[249px] bg-[#788cbe] pr-[3px] font-['Roboto',sans-serif] text-[14px] font-light text-[#e8ebf6]">
          <button type="button" className="w-[125px]">Définitions</button>
          <button type="button" className="flex-1 bg-[#566ab4]">Difficultés</button>
        </div>
      </div>

      <section className="mt-[42px] bg-white px-[25px] pb-[18px] pt-4 text-[15px] text-[#46494e]">
        <h2 className="flex h-[34px] items-start gap-4 text-[17px] leading-7 text-[#556ab3]">
          <FaQuestionCircle size={23} />
          DÉFINITIONS
        </h2>
        <p className="bg-[#f7f7fd] px-2 leading-[37px]">Relatif à la promotion d'un article, d'un produit, à la promotion des ventes.</p>
      </section>

      <section className="mt-[84px] bg-white px-[25px] pb-[19px] pt-[36px] text-[15px] text-[#46494e]">
        <h2 className="flex h-[35px] items-start gap-4 text-[17px] leading-[30px] text-[#556ab3]">
          <BrainIcon />
          DIFFICULTÉS
        </h2>
        <div className="bg-[#f7f7fd] px-2 pb-3 pt-[2px] leading-8">
          <h3 className="text-[14px] font-semibold text-[#333]">ORTHOGRAPHE</h3>
          <p>
            Avec deux <i>n</i> (vient de <i>promotion,</i> comme <i>directionnel</i> de <i>direction, fonctionnel</i> de <i>fonction,</i> etc.).
          </p>
        </div>
      </section>

      <div className="mt-[42px] flex items-center pl-[65px] font-['Roboto',sans-serif]">
        <button type="button" aria-label="Mot précédent" className="text-[#a3aed8]"><FaChevronCircleLeft size={30} /></button>
        <div className="mx-[6px] flex h-12 w-[624px] items-center justify-between border-2 border-[#f0f4f8] bg-white px-[9px] text-[14px] font-bold text-[#222]">
          <a href="#" className="italic text-[#7f90cd]">promotion</a>
          <span>-</span>
          <a href="#" className="italic text-[#7f90cd]">promotionnaire</a>
          <span>-</span>
          <span>promotionnel</span>
          <span>-</span>
          <a href="#" className="italic text-[#7f90cd]">promotionner</a>
          <span>-</span>
          <a href="#" className="italic text-[#7f90cd]">promotions</a>
          <span>-</span>
        </div>
        <button type="button" aria-label="Mot suivant" className="text-[#a3aed8]"><FaChevronCircleRight size={30} /></button>
      </div>
    </main>
  )
}

function ToolRow({ label, icon }: { label: string; icon: ReactNode }) {
  return (
    <a href="#" className="flex h-[66px] items-center px-7 font-['Inter',sans-serif] text-[19px] font-medium text-black">
      <span className="w-[77px] pb-3">{icon}</span>
      <span className="flex-1">{label}</span>
      <ArrowRight size={24} strokeWidth={1.8} className="mr-[18px] text-[#556ab3]" />
    </a>
  )
}

function Sidebar() {
  return (
    <aside className="w-[402px] shrink-0">
      <h2 className="mt-[30px] flex h-7 items-center justify-between text-[18px] text-black">
        <span className="h-[3px] w-10 bg-[#eeeeef]" />
        VOUS CHERCHEZ PEUT-ÊTRE
        <span className="h-[3px] w-10 bg-[#eeeeef]" />
      </h2>
      <div className="mt-[18px] bg-white px-10 pb-[22px] pt-8 shadow-[4px_6px_8px_#cfcfd2]">
        <a href="#" className="block bg-[#d4d8f1] pb-[2px] text-[14px] leading-5 text-[#3c3f47]">
          <b className="block text-[15px] leading-4 text-[#ff4f5e]">promotionnel adj.</b>
          Relatif à la promotion d'un article, d'un produit, à la...
        </a>
      </div>

      <h2 className="mt-[180px] flex h-7 items-center justify-between text-[17px] font-light text-black">
        <span className="h-[3px] w-[120px] bg-[#eeeeef]" />
        OUTILS
        <span className="h-[3px] w-[120px] bg-[#eeeeef]" />
      </h2>
      <div className="mt-[37px] bg-white shadow-[6px_6px_6px_#d3d3d6]">
        <ToolRow label="CONJUGATEUR" icon={<ConjugateurIcon />} />
        <hr className="mx-[10px] border-[#ececee]" />
        <ToolRow label="FORUM" icon={<ForumIcon />} />
        <ToolRow label="JEUX" icon={<JeuxIcon />} />
      </div>
      <a href="#" className="mt-[19px] flex h-[62px] items-center bg-white px-7 font-['Inter',sans-serif] text-[14px] font-medium text-black shadow-[6px_6px_6px_#d3d3d6]">
        <svg width="41" height="22" viewBox="0 0 41 22" className="mr-9">
          <rect width="14" height="22" rx="2" fill="#3f479c" />
          <rect x="14" width="13" height="22" fill="#f4f5f6" />
          <rect x="27" width="14" height="22" rx="2" fill="#f2505a" />
        </svg>
        <span className="flex-1">COURS DE FRANÇAIS</span>
        <ArrowRight size={24} strokeWidth={1.8} className="mr-[18px] text-[#556ab3]" />
      </a>
    </aside>
  )
}

export default function App() {
  return (
    <div className="flex h-screen flex-col overflow-hidden bg-[#dde1ea] font-['Noto_Sans',sans-serif]">
      <DesktopBar />
      <TabBar />
      <Toolbar />
      <div className="flex min-h-0 flex-1">
        <div className="relative flex-1 overflow-hidden">
          <div className="mx-auto min-h-full max-w-[1380px] bg-[#f5f5fa]">
            <SiteHeader />
            <Breadcrumb />
            <div className="flex gap-[30px] pl-14 pr-[57px]">
              <Article />
              <Sidebar />
            </div>
          </div>
          <button type="button" aria-label="Ajouter" className="absolute bottom-[10px] left-[1114px] flex h-[60px] w-[60px] items-center justify-center rounded-full bg-[#a5b1d5] text-white">
            <Plus size={28} strokeWidth={1.8} />
          </button>
        </div>
        {/* Page scrollbar */}
        <div className="w-[10px] border-l border-[#dcdcdc] bg-[#ededed] pl-px pt-[3px]">
          <div className="h-[462px] w-[5px] rounded-full bg-[#7b7b7b]" />
        </div>
      </div>
    </div>
  )
}
